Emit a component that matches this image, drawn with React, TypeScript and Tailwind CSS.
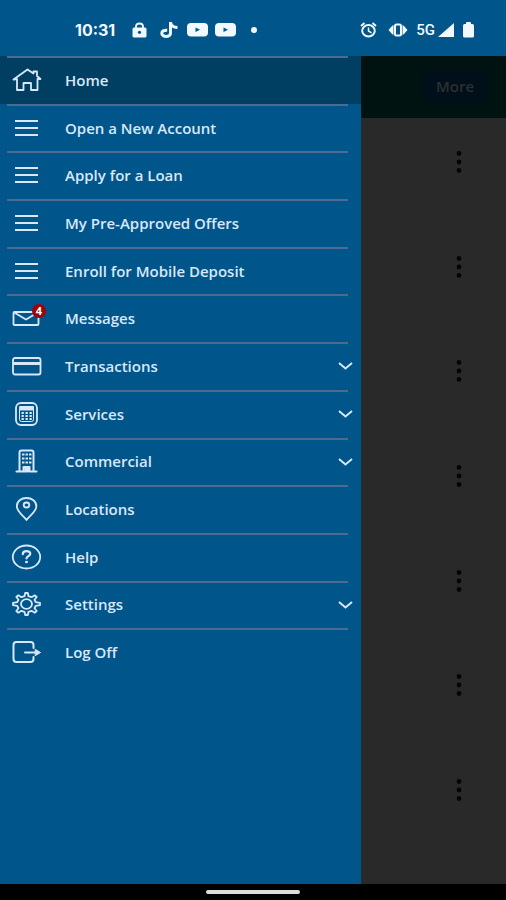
import type { ReactNode } from "react";

type MenuItem = {
  label: string;
  icon: ReactNode;
  active?: boolean;
  badge?: number;
  expandable?: boolean;
};

const Icon = ({ children }: { children: ReactNode }) => (
  <svg
    width="32"
    height="26"
    viewBox="0 0 32 26"
    fill="none"
    stroke="currentColor"
    strokeWidth="1.8"
    strokeLinejoin="round"
    strokeLinecap="round"
    aria-hidden="true"
  >
    {children}
  </svg>
);

const HomeIcon = () => (
  <Icon>
    <path d="M2.5 12.5 16.5 2.5 22.5 6.5V4.5H26V9L29.5 12H26.5V23H20V16H12.5V23H6V12Z" />
  </Icon>
);

const ListIcon = () => (
  <Icon>
    <path d="M4 6H27M4 13H27M4 20H27" strokeLinecap="butt" strokeWidth="2" />
  </Icon>
);

const MailIcon = () => (
  <Icon>
    <rect x="2.5" y="7" width="25" height="13" rx="1" />
    <path d="M4 8 15 14.5 26 8" />
  </Icon>
);

const CardIcon = () => (
  <Icon>
    <rect x="2" y="5" width="27.5" height="16.5" rx="2" />
    <path d="M2 10.5H29" strokeWidth="3" strokeLinecap="butt" />
  </Icon>
);

const CalculatorIcon = () => (
  <Icon>
    <rect x="5" y="2" width="21" height="22" rx="5" />
    <rect x="9" y="5.5" width="13.5" height="3.5" fill="currentColor" strokeWidth="1" />
    <path
      d="M8.5 9V18.5Q8.5 20.5 10.5 20.5H20.5Q22.5 20.5 22.5 18.5V9"
      strokeWidth="1"
    />
    <path
      d="M10.5 12H20.8M10.5 15H20.8M10.5 18H20.8"
      strokeWidth="2"
      strokeLinecap="butt"
      strokeDasharray="2.3 1.7"
    />
  </Icon>
);

const BuildingIcon = () => (
  <Icon>
    <path d="M5.5 23.5H12.5V19H18.5V23.5H25.5" strokeWidth="2" />
    <path d="M8.5 23V4.5Q8.5 2.5 10.5 2.5H20.5Q22.5 2.5 22.5 4.5V23" strokeWidth="2" />
    <path
      d="M11 6.5H21M11 10.5H21M11 14.5H21"
      strokeWidth="2.2"
      strokeLinecap="butt"
      strokeDasharray="2.5 1"
    />
    <path d="M13.5 18.5H17.5V24H13.5Z" fill="currentColor" strokeWidth="1" />
  </Icon>
);

const PinIcon = () => (
  <Icon>
    <path d="M15.500 24C13 20.5 5.8 15.5 5.8 10.2C5.8 5.3 10.2 2 15.5 2S25.4 5.3 25.4 10.2C25.4 15.5 18 20.5 15.5 24Z" />
    <ellipse cx="15.5" cy="9" rx="2.8" ry="2.5" />
  </Icon>
);

const HelpIcon = () => (
  <Icon>
    <ellipse cx="15.5" cy="13" rx="13.7" ry="11.5" />
    <path d="M11.8 10.2C11.8 6 19.3 6.3 19.3 9.8C19.3 12 15.5 12.2 15.5 14.5" strokeWidth="2.2" />
    <ellipse cx="15.5" cy="18" rx="1.5" ry="1.3" fill="currentColor" stroke="none" />
  </Icon>
);

const GearIcon = () => (
  <Icon>
    <path d="M13.5 5.2 14.2 2H16.8L17.5 5.2 20.6 6.2 23.7 4.3 25.7 6 23.5 8.8 24.8 11.2 29 11.8V14.2L24.8 14.8 23.5 17.2 25.7 20 23.7 21.7 20.6 19.8 17.5 20.8 16.8 24H14.2L13.5 20.8 10.4 19.8 7.3 21.7 5.3 20 7.5 17.2 6.2 14.8 2 14.2V11.8L6.2 11.2 7.5 8.8 5.3 6 7.3 4.3 10.4 6.2Z" />
    <ellipse cx="15.5" cy="13" rx="5.5" ry="4.8" />
  </Icon>
);

const LogOffIcon = () => (
  <Icon>
    <path
      d="M22.5 9V6Q22.5 3 19.5 3H5.5Q2.5 3 2.5 6V20Q2.5 23 5.5 23H19.5Q22.5 23 22.5 20V18"
      strokeWidth="2"
    />
    <path d="M14 13.500H26" strokeWidth="2" />
    <path d="M24.5 10.5 29.5 13.5 24.5 16.5Z" fill="currentColor" strokeWidth="1" />
  </Icon>
);

const menuItems: MenuItem[] = [
  { label: "Home", icon: <HomeIcon />, active: true },
  { label: "Open a New Account", icon: <ListIcon /> },
  { label: "Apply for a Loan", icon: <ListIcon /> },
  { label: "My Pre-Approved Offers", icon: <ListIcon /> },
  { label: "Enroll for Mobile Deposit", icon: <ListIcon /> },
  { label: "Messages", icon: <MailIcon />, badge: 4 },
  { label: "Transactions", icon: <CardIcon />, expandable: true },
  { label: "Services", icon: <CalculatorIcon />, expandable: true },
  { label: "Commercial", icon: <BuildingIcon />, expandable: true },
  { label: "Locations", icon: <PinIcon /> },
  { label: "Help", icon: <HelpIcon /> },
  { label: "Settings", icon: <GearIcon />, expandable: true },
  { label: "Log Off", icon: <LogOffIcon /> },
];

const accountRows = [1, 2, 3, 4, 5, 6, 7];

const VideoIcon = () => (
  <svg width="21" height="14" viewBox="0 0 21 14" aria-hidden="true">
    <rect width="21" height="13.5" rx="4" fill="currentColor" />
    <path d="M8.5 4.5 13 6.8 8.5 9Z" fill="#00558a" />
  </svg>
);

const StatusBar = () => (
  <header className="flex h-14 items-center justify-between bg-[#00558a] pl-[75px] pr-8 pt-[3px] text-[#f2f8ff]">
    <div className="flex items-center">
      <time className="w-[57px] font-['Inter'] text-base font-bold leading-5">
        10:31
      </time>
      <svg width="15" height="16" viewBox="0 0 15 16" aria-hidden="true">
        <path d="M4 7V4.500Q4 1.500 7.500 1.500T11 4.500V7" fill="none" stroke="currentColor" strokeWidth="1.8" />
        <rect x="0.5" y="5.5" width="14" height="10" rx="1.5" fill="currentColor" />
        <circle cx="7.5" cy="10.3" r="1.6" fill="#00558a" />
      </svg>
      <svg
        className="ml-[13px] mr-[9px]"
        width="18"
        height="16"
        viewBox="0 0 18 16"
        fill="none"
        stroke="currentColor"
        strokeWidth="3"
        aria-hidden="true"
      >
        <path d="M10.500 0V11.200C10.500 13 8.800 14.400 6.200 14.400S1.800 13.100 1.800 11.200S3.600 8 7.200 8.200" />
        <path d="M10.500 0.500C11 3.800 13.200 5.400 17.500 5.500" />
      </svg>
      <VideoIcon />
      <span className="w-[7px]" />
      <VideoIcon />
      <span className="ml-[15px] size-[6px] rounded-full bg-current" />
    </div>
    <div className="flex items-center">
      <svg
        width="17"
        height="16"
        viewBox="0 0 17 16"
        fill="none"
        stroke="currentColor"
        strokeWidth="2"
        aria-hidden="true"
      >
        <ellipse cx="8.5" cy="8.8" rx="6.3" ry="5.7" />
        <path d="M8.5 5.500V9L11.5 10.8" strokeWidth="1.5" />
        <path d="M1 4 4.5 1M16 4 12.5 1" />
      </svg>
      <svg
        className="ml-[11px] mr-2"
        width="20"
        height="14"
        viewBox="0 0 20 14"
        fill="currentColor"
        aria-hidden="true"
      >
        <path d="M5.5 2V12L4 11 0.500 7 4 3ZM14.5 2V12L16 11 19.500 7 16 3Z" />
        <rect x="7" y="1.5" width="6" height="11" rx="1.5" fill="none" stroke="currentColor" strokeWidth="2" />
      </svg>
      <span className="font-['Roboto'] text-[15px] font-medium leading-5">5G</span>
      <svg className="ml-[3px] mr-[9px]" width="16" height="14" viewBox="0 0 16 14" aria-hidden="true">
        <path d="M16 0V14H0Z" fill="currentColor" />
      </svg>
      <svg width="11" height="16" viewBox="0 0 11 16" fill="currentColor" aria-hidden="true">
        <rect x="3" width="5" height="4" rx="1" />
        <rect y="2" width="11" height="13.5" rx="1.5" />
      </svg>
    </div>
  </header>
);

const MenuRow = ({ label, icon, active, badge, expandable }: MenuItem) => (
  <li className={active ? "flex flex-col bg-[#003f62]" : "flex flex-col"}>
    <span className="ml-[7px] mr-[13px] h-[2px] shrink-0 bg-[#4a6c93]" />
    <button
      type="button"
      aria-expanded={expandable ? false : undefined}
      className="flex w-full flex-1 items-center pb-[2px] pl-[11px] pr-2 text-left text-[#d9e8f8]"
    >
      <span className="relative mr-[22px] shrink-0">
        {icon}
        {badge && (
          <span className="absolute -top-px left-[21px] size-[14px] rounded-full bg-[#a30009] text-center text-[11px] font-bold leading-[14px] text-white">
            {badge}
          </span>
        )}
      </span>
      <span className="flex-1 text-[15px] font-semibold leading-5">{label}</span>
      {expandable && (
        <svg
          width="15"
          height="9"
          viewBox="0 0 15 9"
          fill="none"
          stroke="currentColor"
          strokeWidth="2"
          aria-hidden="true"
        >
          <path d="M1 2 7.5 7.5 14 2" />
        </svg>
      )}
    </button>
  </li>
);

export default function App() {
  return (
    <div className="flex min-h-screen flex-col bg-black font-['Open_Sans','Noto_Sans',sans-serif]">
      <StatusBar />
      <div className="flex flex-1">
        <nav className="w-5/7 bg-[#00558a]" aria-label="Main menu">
          <ul className="grid h-[620px] auto-rows-fr">
            {menuItems.map((item) => (
              <MenuRow key={item.label} {...item} />
            ))}
          </ul>
        </nav>
        <main className="flex flex-1 flex-col bg-[#292929]">
          <div className="flex h-[62px] items-center justify-end bg-[#001310] pb-[2px] pr-[19px]">
            <button
              type="button"
              className="h-8 w-16 rounded-sm bg-[#000f1a] text-[15px] font-semibold text-[#2c2f33]"
            >
              More
            </button>
          </div>
          <ul className="flex flex-1 flex-col items-end justify-between pb-[83px] pr-11 pt-[33px]">
            {accountRows.map((row) => (
              <li key={row}>
                <button type="button" aria-label="Account options" className="block">
                  <svg width="6" height="22" viewBox="0 0 6 22" fill="#050505" aria-hidden="true">
                    <circle cx="3" cy="2.5" r="2.4" />
                    <circle cx="3" cy="11" r="2.4" />
                    <circle cx="3" cy="19.5" r="2.4" />
                  </svg>
                </button>
              </li>
            ))}
          </ul>
        </main>
      </div>
      <footer className="flex h-4 items-center justify-center bg-black">
        <span className="h-1 w-[94px] rounded-full bg-[#dedede]" />
      </footer>
    </div>
  );
}
